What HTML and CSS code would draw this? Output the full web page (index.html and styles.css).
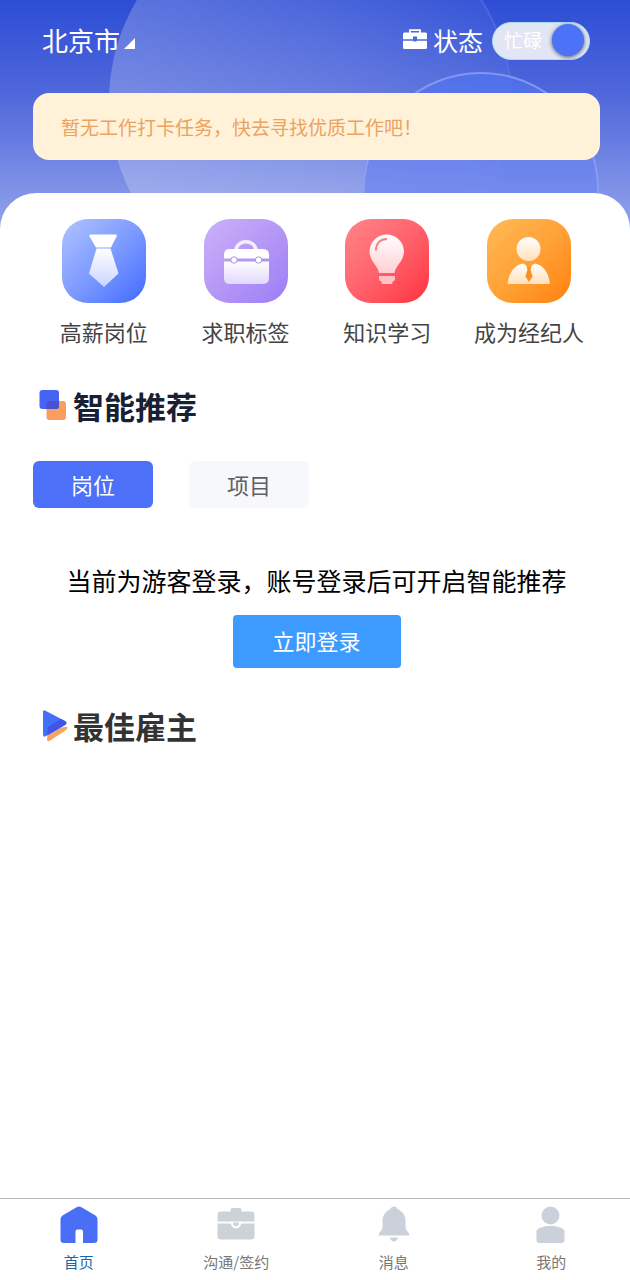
FILE: index.html
```html
<!DOCTYPE html>
<html lang="zh-CN">
<head>
<meta charset="utf-8">
<meta name="viewport" content="width=device-width, initial-scale=1">
<title>首页</title>
<link rel="stylesheet" href="styles.css">
</head>
<body>
<div class="app">
  <svg class="backdrop" viewBox="0 0 630 240" preserveAspectRatio="xMidYMin slice" aria-hidden="true">
    <defs>
      <linearGradient id="sky" x1="0" y1="0" x2="0" y2="1">
        <stop offset="0" stop-color="#2d4dd5"/><stop offset=".4" stop-color="#5068db"/><stop offset="1" stop-color="#98a8ed"/>
      </linearGradient>
      <linearGradient id="big" x1="0" y1=".2" x2="1" y2="0">
        <stop offset="0" stop-color="#fff" stop-opacity=".22"/><stop offset=".5" stop-color="#fff" stop-opacity=".14"/><stop offset="1" stop-color="#fff" stop-opacity=".02"/>
      </linearGradient>
      <linearGradient id="small" x1="0" y1="0" x2="0" y2="1">
        <stop offset="0" stop-color="#4e72f2" stop-opacity=".6"/><stop offset=".5" stop-color="#6e86ee" stop-opacity=".75"/><stop offset="1" stop-color="#8fa0ee"/>
      </linearGradient>
    </defs>
    <rect width="630" height="240" fill="url(#sky)"/>
    <circle cx="310" cy="102" r="201" fill="url(#big)"/>
    <path d="M481 0A201 201 0 0 1 495 190" fill="none" stroke="#8ea2f5" stroke-opacity=".2" stroke-width="2"/>
    <circle cx="481" cy="190" r="117" fill="url(#small)" stroke="#8da1f4" stroke-opacity=".8" stroke-width="2"/>
  </svg>

  <header class="topbar">
    <button class="city" type="button">北京市
      <svg width="11" height="11" viewBox="0 0 11 11" aria-hidden="true"><path d="M11 0V11H0Z" fill="#fff"/></svg>
    </button>
    <div class="status">
      <svg width="24" height="20" viewBox="0 0 24 20" aria-hidden="true">
        <path d="M7 4V1.2H17V4" fill="none" stroke="#fff" stroke-width="1.8"/>
        <path d="M1.5 3.5H22.5Q24 3.500 24 5V10.300H14V7.500H10V10.300H0V5Q0 3.500 1.500 3.500Z" fill="#fff"/>
        <path d="M0 11.700H10.500V12.500H13.500V11.700H24V18.500Q24 20 22.500 20H1.500Q0 20 0 18.500Z" fill="#fff"/>
      </svg>
      <span>状态</span>
      <label class="switch"><span>忙碌</span><input type="checkbox" role="switch" checked></label>
    </div>
  </header>

  <p class="notice">暂无工作打卡任务，快去寻找优质工作吧！</p>

  <main class="sheet">
    <nav class="services" aria-label="服务">
      <a class="service" href="#jobs">
        <svg class="tile" viewBox="0 0 84 84" aria-hidden="true">
          <defs>
            <linearGradient id="blue" x1="0" y1="0" x2="1" y2="1"><stop offset="0" stop-color="#b0c3ff"/><stop offset=".5" stop-color="#7d9bff"/><stop offset="1" stop-color="#426aff"/></linearGradient>
            <linearGradient id="tie" x1="0" y1="0" x2="0" y2="1"><stop offset="0" stop-color="#fff"/><stop offset="1" stop-color="#c9d5ff"/></linearGradient>
          </defs>
          <rect width="84" height="84" rx="26" fill="url(#blue)"/>
          <path d="M28.500 15.500H53.500Q55.500 15.500 54.700 17.300L49 28.500H34L27.400 17.300Q27 15.500 28.500 15.500Z" fill="#fff"/>
          <path d="M34.500 29.500H48.500L56.500 54.500L42 68L27 54.500Z" fill="url(#tie)"/>
        </svg>
        <span>高薪岗位</span>
      </a>
      <a class="service" href="#tags">
        <svg class="tile" viewBox="0 0 84 84" aria-hidden="true">
          <defs>
            <linearGradient id="violet" x1="0" y1="0" x2="1" y2="1"><stop offset="0" stop-color="#ccb2f9"/><stop offset=".5" stop-color="#b597f6"/><stop offset="1" stop-color="#9c7df7"/></linearGradient>
            <linearGradient id="bag" x1="0" y1="0" x2="0" y2="1"><stop offset="0" stop-color="#fff"/><stop offset="1" stop-color="#e1d7fc"/></linearGradient>
          </defs>
          <rect width="84" height="84" rx="26" fill="url(#violet)"/>
          <path d="M32 31C33 20 51 20 52 31" fill="none" stroke="#f4edfe" stroke-width="3.500"/>
          <path d="M25 30H59Q65 30 65 36V39.500H20V36Q20 30 25 30Z" fill="#fff"/>
          <path d="M20 42.500H65V59Q65 65 59 65H26Q20 65 20 59Z" fill="url(#bag)"/>
          <circle cx="30" cy="41" r="3.200" fill="#fff" stroke="#ae91ed" stroke-width="1"/>
          <circle cx="54.500" cy="41" r="3.200" fill="#fff" stroke="#ae91ed" stroke-width="1"/>
        </svg>
        <span>求职标签</span>
      </a>
      <a class="service" href="#learn">
        <svg class="tile" viewBox="0 0 84 84" aria-hidden="true">
          <defs>
            <linearGradient id="red" x1="0" y1="0" x2="1" y2="1"><stop offset="0" stop-color="#ff8588"/><stop offset=".5" stop-color="#ff626c"/><stop offset="1" stop-color="#ff333e"/></linearGradient>
            <linearGradient id="bulb" x1="0" y1="0" x2="0" y2="1"><stop offset="0" stop-color="#fff"/><stop offset="1" stop-color="#ffd0d4"/></linearGradient>
          </defs>
          <rect width="84" height="84" rx="26" fill="url(#red)"/>
          <path d="M34 54C33 46 24.500 43 24.500 31.500A17.300 17.300 0 0 1 59 31.500C59 43 50.500 46 49.500 54Z" fill="url(#bulb)"/>
          <path d="M31 31.500C31 24.500 35 20 42 20" fill="none" stroke="#fa7b84" stroke-width="2"/>
          <path d="M34 57H50V60.500Q50 62 48 62L47 65H37L36 62Q34 62 34 60.500Z" fill="#ffc1c6"/>
        </svg>
        <span>知识学习</span>
      </a>
      <a class="service" href="#agent">
        <svg class="tile" viewBox="0 0 84 84" aria-hidden="true">
          <defs>
            <linearGradient id="orange" x1="0" y1="0" x2="1" y2="1"><stop offset="0" stop-color="#ffba56"/><stop offset=".5" stop-color="#ffa238"/><stop offset="1" stop-color="#ff810d"/></linearGradient>
            <linearGradient id="person" x1="0" y1="0" x2="0" y2="1"><stop offset="0" stop-color="#fff"/><stop offset="1" stop-color="#ffe0b9"/></linearGradient>
          </defs>
          <rect width="84" height="84" rx="26" fill="url(#orange)"/>
          <circle cx="41.500" cy="30" r="12" fill="url(#person)"/>
          <path d="M20.500 65C21.500 55 27 46 36 44.500L42 48L48 44.500C57 46 62 55 63 65Z" fill="url(#person)"/>
          <path d="M39 46L42 48L45 46L43.500 50.500L45.500 57.500L42 63L38.500 57.500L40.500 50.500Z" fill="#fa9023"/>
        </svg>
        <span>成为经纪人</span>
      </a>
    </nav>

    <section class="recommend">
      <h2 class="title">
        <svg width="30" height="34" viewBox="0 0 30 34" aria-hidden="true">
          <rect x="8.500" y="13" width="19.500" height="19" rx="3" fill="#f99e5e"/>
          <rect x="1.500" y="2" width="19.500" height="19" rx="3" fill="#4564f5"/>
          <path d="M8.500 16Q8.500 13 11.500 13H21V18Q21 21 18 21H8.500Z" fill="#4a51cf"/>
        </svg>智能推荐</h2>
      <div class="tabs" role="tablist">
        <button class="tab tab-active" type="button" role="tab" aria-selected="true">岗位</button>
        <button class="tab" type="button" role="tab" aria-selected="false">项目</button>
      </div>
      <div class="guest">
        <p>当前为游客登录，账号登录后可开启智能推荐</p>
        <button class="login" type="button">立即登录</button>
      </div>
    </section>

    <section class="employers">
      <h2 class="title title-dark">
        <svg width="30" height="34" viewBox="0 0 30 34" aria-hidden="true">
          <path d="M10 23L26 19Q32 18 28 22L13 32Q9 35 9 31Z" fill="#f7a364"/>
          <path d="M5 4Q5 1 8 3L27 13Q30 15 27 17L8 28Q5 30 5 26Z" fill="#4470f7"/>
          <path d="M10 19L23 11L27 13Q30 15 27 17L9 27.500Z" fill="#3e55ed"/>
        </svg>最佳雇主</h2>
    </section>
  </main>

  <nav class="tabbar" aria-label="主导航">
    <a class="item item-active" href="#home">
      <svg width="38" height="38" viewBox="0 0 38 38" aria-hidden="true"><path d="M17 1Q19 -.200 21 1L35.500 9.500Q37.500 11 37.500 13.500V33.500Q37.500 37 34 37H23V25.500Q23 23.500 21 23.500H17.500Q15.500 23.500 15.500 25.500V37H4Q.500 37 .500 33.500V13.500Q.500 11 2.500 9.500Z" fill="#4a6ff7"/></svg>
      <span>首页</span>
    </a>
    <a class="item" href="#contact">
      <svg width="38" height="38" viewBox="0 0 38 38" aria-hidden="true"><path d="M13.500 5.500V4Q13.500 2 15.500 2H22.500Q24.500 2 24.500 4V5.500H34Q37.500 5.500 37.500 8.500V15.500H.500V8.500Q.500 5.500 4 5.500Z M.500 17.500H14A5 5 0 0 0 24 17.500H37.500V30.500Q37.500 33.500 34 33.500H4Q.500 33.500 .500 30.500Z" fill="#cdd2d8"/><path d="M16.200 17.500V16.500H21.800V17.500A2.800 2.800 0 0 1 16.200 17.500Z" fill="#cdd2d8"/></svg>
      <span>沟通/签约</span>
    </a>
    <a class="item" href="#messages">
      <svg width="38" height="38" viewBox="0 0 38 38" aria-hidden="true"><path d="M15.500 3C16 -.500 22 -.500 22.500 3C27 5 30.500 9 30.500 15V21Q30.500 24 33 26Q34.500 27.500 34.500 29.500H3.500Q3.500 27.500 5 26Q7.500 24 7.500 21V15C7.500 9 11 5 15.500 3Z" fill="#cbd0da"/><path d="M15 31.500H23Q22 35.500 19 35.500T15 31.500Z" fill="#cbd0da"/></svg>
      <span>消息</span>
    </a>
    <a class="item" href="#me">
      <svg width="38" height="38" viewBox="0 0 38 38" aria-hidden="true"><circle cx="18.500" cy="9.500" r="9" fill="#cbd0da"/><path d="M4.500 25C5 22 12 20 18.500 20S32 22 32.500 25V34Q32.500 37 29.500 37H7.500Q4.500 37 4.500 34Z" fill="#cbd0da"/></svg>
      <span>我的</span>
    </a>
  </nav>
</div>
</body>
</html>
```
FILE: styles.css
```css
* {
  box-sizing: border-box;
}

body {
  margin: 0;
  background: #fff;
  color: #000;
  font-family: "Noto Sans CJK SC", sans-serif;
}

button {
  border: 0;
  padding: 0;
  background: none;
  font: inherit;
  color: inherit;
  cursor: pointer;
}

a {
  color: inherit;
  text-decoration: none;
}

p,
h2 {
  margin: 0;
}

svg {
  flex: none;
}

.app {
  position: relative;
  display: flex;
  flex-direction: column;
  min-height: 100vh;
}

.backdrop {
  position: absolute;
  top: 0;
  left: 0;
  z-index: -1;
  width: 100%;
  height: 240px;
}

.topbar {
  display: flex;
  align-items: flex-start;
  justify-content: space-between;
  padding: 22px 40px 0 42px;
  color: #fff;
}

.city {
  display: flex;
  align-items: center;
  gap: 4px;
  font-size: 26px;
  line-height: 36px;
}

.city svg {
  margin-top: 6px;
}

.status {
  display: flex;
  align-items: flex-start;
  gap: 6px;
  font-size: 25px;
  line-height: 36px;
}

.status svg {
  margin-top: 7px;
}

.switch {
  display: flex;
  align-items: center;
  justify-content: space-between;
  width: 98px;
  height: 38px;
  margin-left: 3px;
  padding: 0 5px 2px 11px;
  border: 1px solid #a9defa;
  border-radius: 19px;
  background: #e2e6f4;
  font-size: 19px;
}

.switch input {
  appearance: none;
  width: 32px;
  height: 32px;
  margin: 0;
  border-radius: 50%;
  background: #4c72f7;
  box-shadow: 0 1px 4px #44506f;
}

.notice {
  margin: 33px 30px 0 33px;
  padding: 18px 28px;
  border-radius: 16px;
  background: #fff2d8;
  color: #eba263;
  font-size: 19px;
  line-height: 31px;
}

.sheet {
  flex: 1;
  margin-top: 33px;
  padding: 26px 30px 24px 33px;
  border-radius: 36px 36px 0 0;
  background: #fff;
}

.services {
  display: grid;
  grid-template-columns: repeat(4, 1fr);
}

.service {
  display: flex;
  flex-direction: column;
  align-items: center;
  gap: 12px;
  color: #444;
  font-size: 22px;
  line-height: 32px;
  white-space: nowrap;
}

.tile {
  width: 84px;
  height: 84px;
}

.title {
  display: flex;
  align-items: center;
  gap: 5px;
  margin-top: 39px;
  padding-left: 5px;
  color: #182033;
  font-size: 31px;
  line-height: 40px;
}

.title svg {
  margin-bottom: 2px;
}

.title-dark {
  margin-top: 38px;
  color: #333;
}

.tabs {
  display: flex;
  gap: 36px;
  margin-top: 35px;
}

.tab {
  width: 120px;
  border-radius: 6px;
  background: #f7f8fb;
  color: #5b5f66;
  font-size: 22px;
  line-height: 47px;
}

.tab-active {
  background: #4c70f8;
  color: #fff;
}

.guest {
  display: flex;
  flex-direction: column;
  align-items: center;
  gap: 17px;
  margin-top: 54px;
  font-size: 25px;
  line-height: 36px;
}

.login {
  width: 168px;
  padding-bottom: 3px;
  border-radius: 4px;
  background: #3d9bff;
  color: #fff;
  font-size: 22px;
  line-height: 50px;
}

.tabbar {
  display: grid;
  grid-template-columns: repeat(4, 1fr);
  padding: 7px 0;
  border-top: 1px solid #b8b8b8;
  background: #fff;
}

.item {
  display: flex;
  flex-direction: column;
  align-items: center;
  gap: 6px;
  color: #777;
  font-size: 15px;
  line-height: 23px;
}

.item-active {
  color: #1768a8;
}
```
